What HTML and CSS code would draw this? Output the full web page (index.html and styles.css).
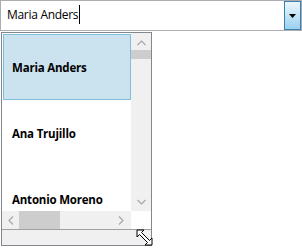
FILE: index.html
```html
<!DOCTYPE html>
<html lang="en">
<head>
  <meta charset="UTF-8">
  <title>Combo Box</title>
  <link rel="stylesheet" href="styles.css">
</head>
<body>
  <div class="combo">
    <div class="combo-text">Maria Anders<span class="caret"></span></div>
    <div class="combo-button">
      <svg width="7" height="4" viewBox="0 0 7 4"><polygon points="0,0 7,0 3.5,4" fill="#000"/></svg>
    </div>
  </div>

  <div class="popup">
    <div class="viewport">
      <div class="list">
        <div class="item selected">Maria Anders</div>
        <div class="item">Ana Trujillo</div>
        <div class="item">Antonio Moreno</div>
      </div>
      <div class="vscroll">
        <svg class="arrow-up" width="9" height="6" viewBox="0 0 9 6"><polyline points="0.5,5 4.5,1 8.5,5" fill="none" stroke="#a6a6a6" stroke-width="1.2"/></svg>
        <div class="vthumb"></div>
        <div class="spacer"></div>
        <svg class="arrow-down" width="9" height="6" viewBox="0 0 9 6"><polyline points="0.5,1 4.5,5 8.5,1" fill="none" stroke="#a6a6a6" stroke-width="1.2"/></svg>
      </div>
    </div>
    <div class="hrow">
      <div class="hscroll">
        <svg class="arrow-left" width="6" height="9" viewBox="0 0 6 9"><polyline points="5,0.5 1,4.5 5,8.5" fill="none" stroke="#a6a6a6" stroke-width="1.2"/></svg>
        <div class="hthumb"></div>
        <div class="spacer"></div>
        <svg class="arrow-right" width="6" height="9" viewBox="0 0 6 9"><polyline points="1,0.5 5,4.5 1,8.5" fill="none" stroke="#a6a6a6" stroke-width="1.2"/></svg>
      </div>
      <div class="corner"></div>
    </div>
    <div class="footer"></div>
    <svg class="resize-cursor" width="17" height="17" viewBox="0 0 17 17">
      <polygon points="1,1 8,1 5.5,3.5 13.5,11.5 16,9 16,16 9,16 11.5,13.5 3.5,5.5 1,8" fill="#fff" stroke="#000" stroke-width="1" stroke-linejoin="miter"/>
    </svg>
  </div>
</body>
</html>
```

FILE: styles.css
```css
body {
  margin: 0;
  font-family: "Open Sans", "Noto Sans", Arial, sans-serif;
  background: #fff;
}
.combo {
  display: flex;
  width: 300px;
  height: 29px;
  border: 1px solid #abadb3;
  background: #fff;
}
.combo-text {
  flex: 1;
  display: flex;
  align-items: center;
  padding-left: 6px;
  padding-bottom: 2px;
  font-size: 12px;
  color: #000;
  letter-spacing: -0.3px;
}
.caret {
  display: inline-block;
  width: 1px;
  height: 19px;
  background: #000;
  margin-left: 1px;
}
.combo-button {
  width: 15px;
  border: 1px solid #3c7fb1;
  background: linear-gradient(#ecf6fc, #c4e5f6 50%, #98d1ef);
  display: flex;
  align-items: center;
  justify-content: center;
}
.popup {
  position: relative;
  width: 149px;
  margin: 1px 0 0 1px;
  border: 1px solid #828790;
  background: #fff;
}
.viewport {
  display: flex;
  height: 178px;
  overflow: hidden;
}
.list {
  flex: 1;
  padding: 1px 0 0 1px;
  overflow: hidden;
}
.item {
  height: 66px;
  display: flex;
  align-items: center;
  padding-left: 8px;
  font-size: 11.5px;
  font-weight: bold;
  white-space: nowrap;
  color: #000;
  letter-spacing: -0.2px;
  border: 1px solid transparent;
  box-sizing: border-box;
}
.item.selected {
  background: #cbe3ee;
  border-color: #7ec0dc;
}
.vscroll {
  width: 20px;
  background: #f0f0f0;
  display: flex;
  flex-direction: column;
  align-items: center;
}
.arrow-up {
  margin-top: 7px;
}
.vthumb {
  align-self: stretch;
  height: 9px;
  margin-top: 4px;
  background: #cdcdcd;
}
.spacer {
  flex: 1;
}
.arrow-down {
  margin-bottom: 6px;
}
.hrow {
  display: flex;
  height: 18px;
}
.hscroll {
  flex: 1;
  background: #f0f0f0;
  display: flex;
  align-items: center;
}
.arrow-left {
  margin-left: 6px;
}
.hthumb {
  align-self: stretch;
  width: 41px;
  margin-left: 5px;
  background: #cdcdcd;
}
.arrow-right {
  margin-right: 7px;
}
.corner {
  width: 20px;
  background: #fff;
}
.footer {
  height: 15px;
  border-top: 1px solid #a0a0a0;
  background: #f0f0f0;
}
.resize-cursor {
  position: absolute;
  right: -2px;
  bottom: -1px;
}
```
